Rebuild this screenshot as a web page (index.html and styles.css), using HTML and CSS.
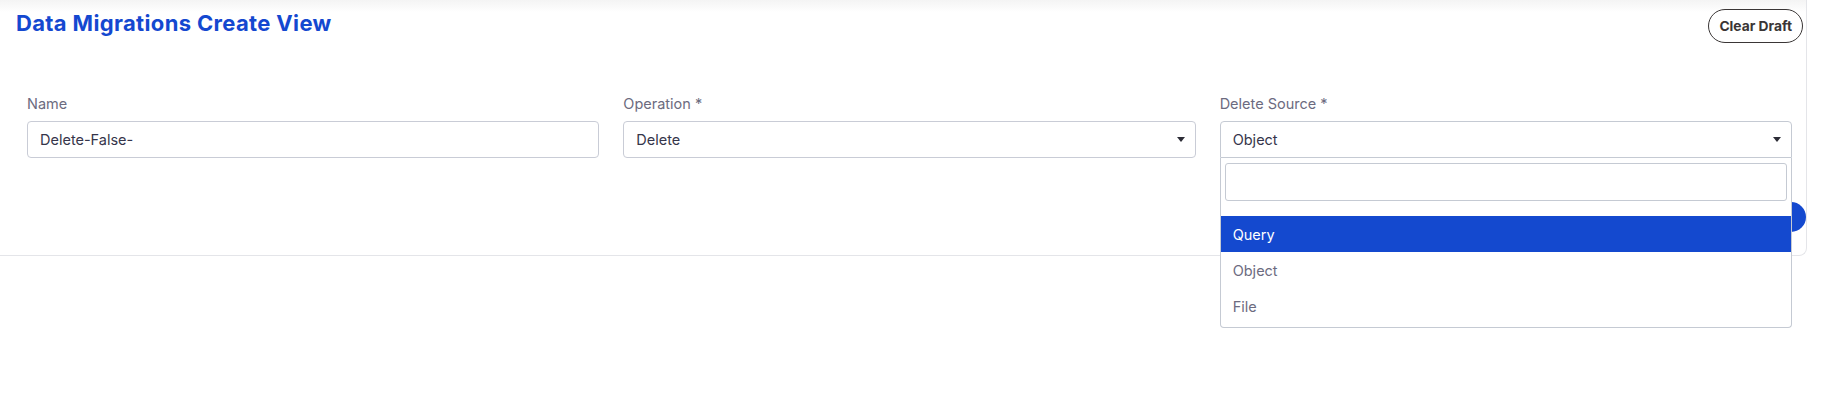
FILE: index.html
```html
<!DOCTYPE html>
<html lang="en">
<head>
<meta charset="utf-8">
<title>Data Migrations Create View</title>
<link rel="stylesheet" href="styles.css">
</head>
<body>
<div class="card">
  <div class="card-head">
    <h1 class="title">Data Migrations Create View</h1>
    <button class="btn-outline" type="button">Clear Draft</button>
  </div>
  <div class="form-grid">
    <div class="field">
      <label class="label">Name</label>
      <div class="control"><span class="value">Delete-False-</span></div>
    </div>
    <div class="field">
      <label class="label">Operation *</label>
      <div class="control select"><span class="value">Delete</span><span class="caret"></span></div>
    </div>
    <div class="field field-open">
      <label class="label">Delete Source *</label>
      <div class="control select open"><span class="value">Object</span><span class="caret"></span></div>
      <div class="dropdown">
        <div class="search-wrap"><div class="search"></div></div>
        <ul class="options">
          <li class="option active">Query</li>
          <li class="option">Object</li>
          <li class="option">File</li>
        </ul>
      </div>
    </div>
  </div>
  <div class="card-foot">
    <button class="btn-primary" type="button">Next</button>
  </div>
</div>
</body>
</html>
```

FILE: styles.css
```css
* { box-sizing: border-box; }

html, body {
  margin: 0;
  padding: 0;
  background: #ffffff;
  font-family: Inter, "Noto Sans", "Liberation Sans", sans-serif;
  min-height: 395px;
}

.card {
  width: 1807px;
  height: 256px;
  background: linear-gradient(#f4f4f4 0, #fbfbfb 8px, #ffffff 12px);
  border-right: 1px solid #e4e5e9;
  border-bottom: 1px solid #e4e5e9;
  border-bottom-right-radius: 8px;
  display: flex;
  flex-direction: column;
}

.card-head {
  display: flex;
  justify-content: space-between;
  align-items: flex-start;
  padding: 9px 3px 0 16px;
  height: 80px;
}

.title {
  margin: 1px 0 0;
  font-size: 22px;
  line-height: 26px;
  font-weight: 700;
  color: #1448d0;
  letter-spacing: 0.35px;
}

.btn-outline {
  height: 34px;
  padding: 0 10px;
  border: 1px solid #3a3636;
  border-radius: 17px;
  background: #ffffff;
  color: #3a3535;
  font-family: inherit;
  font-size: 13.8px;
  font-weight: 700;
}

.form-grid {
  display: grid;
  grid-template-columns: repeat(3, 1fr);
  column-gap: 24px;
  padding: 15px 14px 0 27px;
  width: 1806px;
}

.field { position: relative; }

.label {
  display: block;
  font-size: 14.5px;
  line-height: 18px;
  color: #6c6b80;
  margin-bottom: 8px;
}

.control {
  height: 37px;
  border: 1px solid #c9ccd6;
  border-radius: 4px;
  display: flex;
  align-items: center;
  padding: 0 12px;
  background: #ffffff;
}

.value {
  font-size: 14.5px;
  color: #35354a;
}

.select { justify-content: space-between; padding-right: 10px; }

.caret {
  width: 0;
  height: 0;
  border-left: 4px solid transparent;
  border-right: 4px solid transparent;
  border-top: 5px solid #2c2c36;
}

.select.open {
  border-bottom-left-radius: 0;
  border-bottom-right-radius: 0;
  border-color: #c5cad3;
}

.dropdown {
  position: absolute;
  top: 63px;
  left: 0;
  right: 0;
  z-index: 5;
  background: #ffffff;
  border: 1px solid #c5cad3;
  border-top: none;
  border-radius: 0 0 4px 4px;
}

.search-wrap { padding: 5px 4px 15px 4px; }

.search {
  height: 38px;
  border: 1px solid #c5cad3;
  border-radius: 3px;
}

.options {
  list-style: none;
  margin: 0;
  padding: 0 0 3px 0;
}

.option {
  height: 36px;
  display: flex;
  align-items: center;
  padding: 0 12px;
  font-size: 14.5px;
  color: #6c6b80;
}

.option.active {
  background: #1449cf;
  color: #ffffff;
}

.card-foot {
  display: flex;
  justify-content: flex-end;
  padding: 44px 0 0 0;
}

.btn-primary {
  height: 30px;
  padding: 0 26px;
  border: none;
  border-radius: 15px;
  background: #1449cf;
  color: #ffffff;
  font-family: inherit;
  font-size: 13px;
  font-weight: 700;
}
```
